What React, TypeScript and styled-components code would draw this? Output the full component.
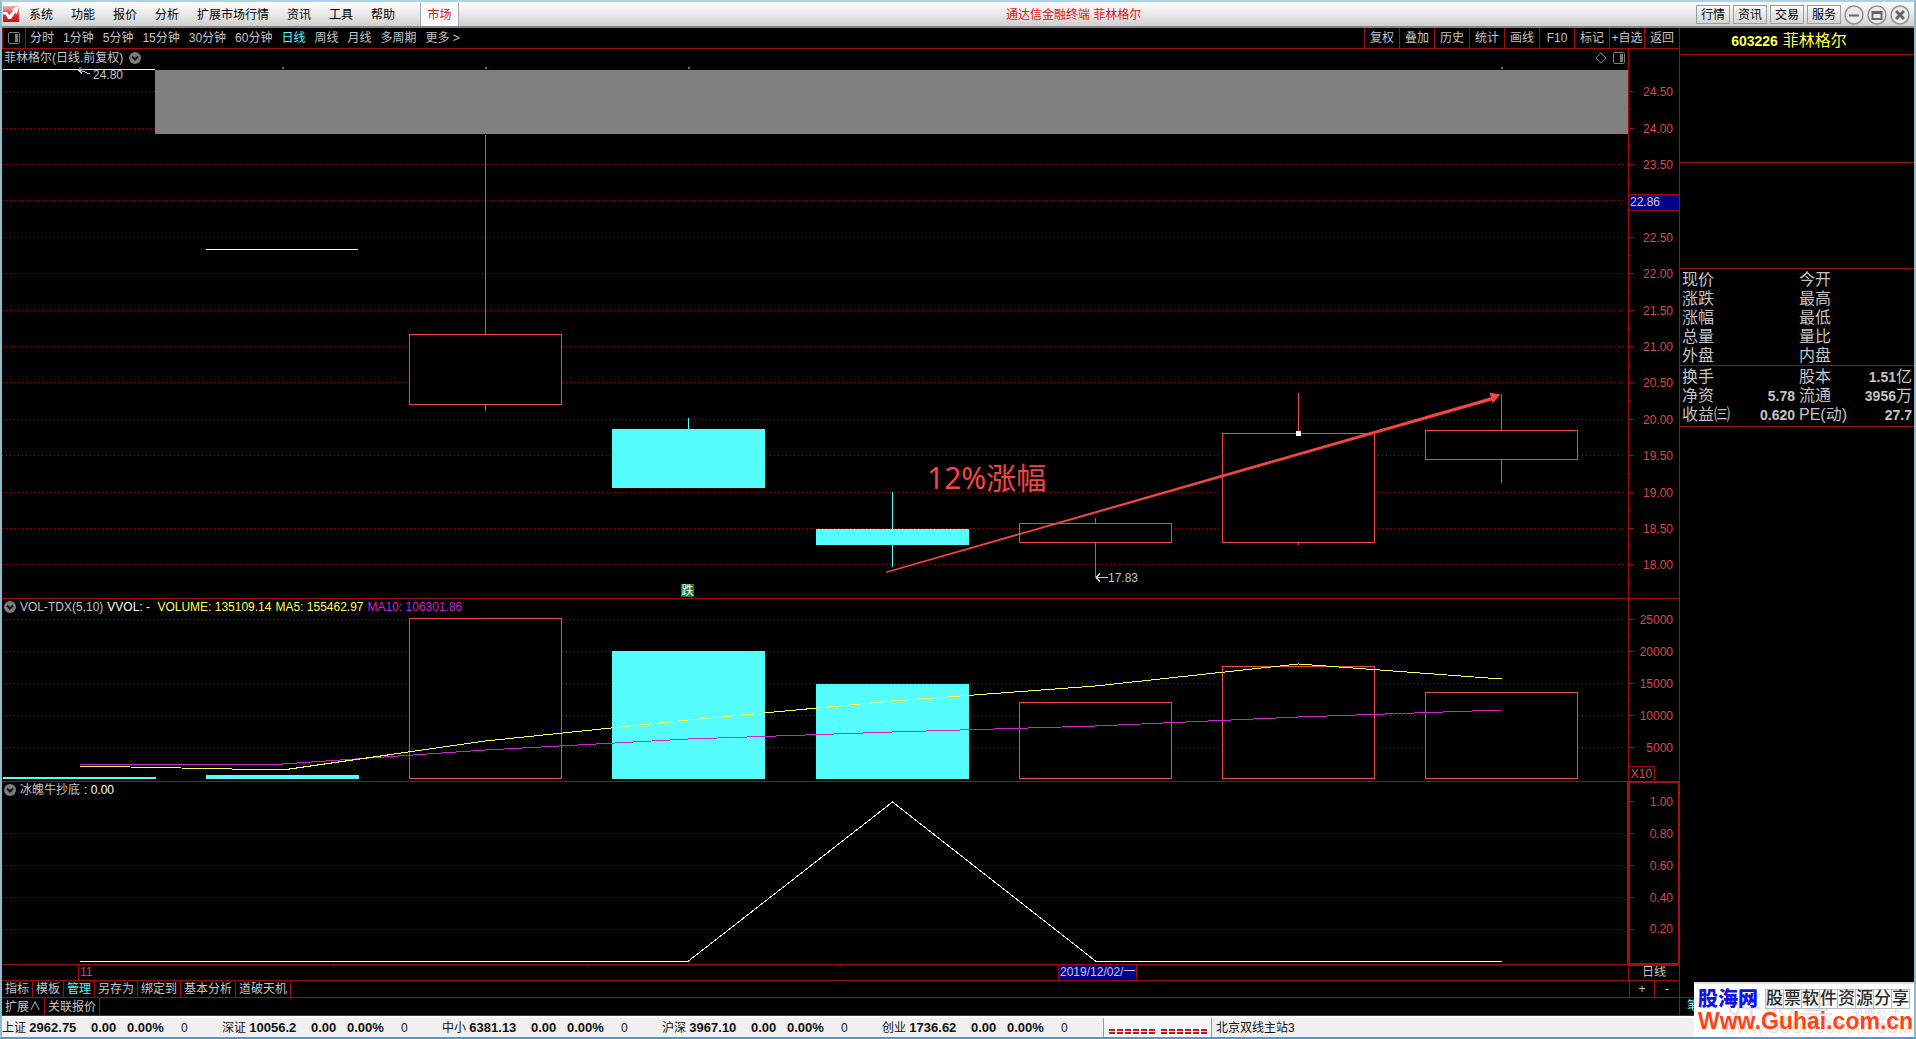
import React from "react";
import styled, { createGlobalStyle } from "styled-components";

const LINE = "#a00c10";
const RED = "#f24545";
const AXIS_TEXT = "#dc4646";
const CYAN = "#54fcfc";
const SILVER = "#c4c4c4";
const YELLOW = "#ffff54";
const PURPLE = "#d420d4";

const GlobalStyle = createGlobalStyle`
  html, body { margin: 0; background: #000; }
  * { box-sizing: border-box; }
  body, button, td, th {
    font-family: "Liberation Sans", "Noto Sans CJK SC", sans-serif;
    font-size: 12px;
    line-height: 16px;
    font-weight: 400;
  }
  button { background: none; border: 0; padding: 0; margin: 0; color: inherit; white-space: nowrap; cursor: pointer; }
`;

const Window = styled.div`
  position: relative;
  height: 100vh;
  display: flex;
  flex-direction: column;
  overflow: hidden;
  background: #000;
  color: ${SILVER};
  border: 2px solid #8fb9cf;
  border-top-color: #a9d3ea;
  border-bottom-color: #4a9cd0;
`;

/* Title bar */

const TitleBar = styled.header`
  height: 26px;
  flex: none;
  display: flex;
  align-items: stretch;
  padding-top: 1px;
  background: linear-gradient(#fdfdfd, #e9e9e9 50%, #cfcfcf);
  border-bottom: 2px solid #858585;
  color: #000;
`;
const Logo = styled.svg`
  margin: 3px 10px 0 1px;
  width: 16px;
  height: 16px;
  flex: none;
`;
const Menu = styled.nav`
  display: flex;
  gap: 18px;
`;
const MarketTab = styled.button`
  margin-left: 25px;
  width: 39px;
  color: #d81414;
  background: #fbf9f9;
  border-left: 1px solid #a8a8b4;
  border-right: 1px solid #a8a8b4;
`;
const Caption = styled.h1`
  flex: 1;
  margin: 0;
  padding-right: 8px;
  font-size: 12px;
  line-height: 24px;
  font-weight: 400;
  color: #e01414;
  text-align: center;
`;
const WindowActions = styled.div`
  display: flex;
  align-items: center;
  gap: 3px;
  padding-right: 4px;
`;
const ActionButton = styled.button`
  width: 34px;
  height: 19px;
  border: 1px solid #9c9c9c;
  background: linear-gradient(#fafafa, #d4d4d4);
`;
const RoundButton = styled.button`
  width: 20px;
  height: 20px;
  display: grid;
`;

/* Work area */

const Work = styled.main`
  flex: 1;
  min-height: 0;
  display: flex;
`;
const Left = styled.section`
  flex: 1;
  min-width: 0;
  display: flex;
  flex-direction: column;
`;
const Toolbar = styled.div`
  height: 21px;
  flex: none;
  display: flex;
  border-bottom: 1px solid ${LINE};
`;
const LayoutButton = styled.button`
  width: 24px;
  display: grid;
  place-items: center;
  border-left: 1px solid ${LINE};
  border-right: 1px solid ${LINE};
`;
const Periods = styled.nav`
  flex: 1;
  display: flex;
  gap: 9px;
  padding-left: 4px;
`;
const Period = styled.button<{ $on?: boolean }>`
  color: ${(p) => (p.$on ? CYAN : SILVER)};
`;
const ToolCell = styled.button`
  width: 35px;
  border-left: 1px solid ${LINE};
`;

const Charts = styled.div`
  flex: 1;
  min-height: 0;
  display: grid;
  grid-template-rows: 550fr 183fr 183fr 16px;
`;
const Panel = styled.div`
  min-height: 0;
  display: flex;
`;
const Plot = styled.div`
  position: relative;
  flex: 1;
  border-bottom: 1px solid ${LINE};
`;
const Axis = styled.div<{ $active?: boolean }>`
  position: relative;
  width: 51px;
  display: flex;
  align-items: flex-end;
  border-left: 1px solid ${LINE};
  border-bottom: 1px solid ${LINE};
  ${(p) => p.$active && "box-shadow: inset 0 0 0 1px #a81014, 0 0 0 1px #a81014;"}
`;
const Drawing = styled.svg`
  position: absolute;
  inset: 0;
  width: 100%;
  height: 100%;
`;
const PanelTitle = styled.div`
  position: relative;
  display: flex;
  align-items: center;
  gap: 4px;
  height: 16px;
  padding: 0 3px 0 2px;
`;
const MainTitle = styled(PanelTitle)`
  gap: 6px;
  height: 18px;
`;
const Reading = styled.span<{ $color?: string }>`
  color: ${(p) => p.$color ?? "#fff"};
  white-space: pre;
`;
const Spacer = styled.span`
  flex: 1;
`;
const IconButton = styled.button`
  display: grid;
  place-items: center;
`;
const Multiplier = styled.span`
  width: 26px;
  height: 15px;
  line-height: 14px;
  text-align: center;
  color: ${AXIS_TEXT};
  border: 1px solid ${LINE};
  border-left: 0;
  border-bottom: 0;
`;

const Timeline = styled.div`
  position: relative;
  flex: 1;
  line-height: 15px;
  border-bottom: 1px solid ${LINE};
`;
const MonthMark = styled.span`
  position: absolute;
  top: 0;
  bottom: 0;
  padding-left: 1px;
  border-left: 1px solid ${LINE};
  color: ${AXIS_TEXT};
`;
const DateMark = styled.span`
  position: absolute;
  top: 0;
  bottom: 0;
  padding: 0 1px;
  white-space: nowrap;
  background: #000088;
  color: #c8c8e8;
  border-left: 1px solid ${LINE};
  border-right: 1px solid ${LINE};
`;
const PeriodName = styled.div`
  width: 51px;
  line-height: 15px;
  text-align: center;
  border-left: 1px solid ${LINE};
  border-bottom: 1px solid ${LINE};
`;

const TabRow = styled.div`
  height: 17px;
  flex: none;
  display: flex;
  border-bottom: 1px solid ${LINE};
`;
const LastTabRow = styled(TabRow)`
  height: 18px;
`;
const Tab = styled.button<{ $on?: boolean }>`
  padding: 0 3px;
  border-right: 1px solid ${LINE};
  color: ${(p) => (p.$on ? CYAN : SILVER)};
`;
const ZoomButton = styled.button`
  width: 25px;
  border-left: 1px solid ${LINE};
`;

/* Quote panel */

const Side = styled.aside`
  width: 235px;
  flex: none;
  display: flex;
  flex-direction: column;
  border-left: 1px solid ${LINE};
`;
const StockName = styled.h2`
  height: 27px;
  margin: 0;
  padding-right: 16px;
  display: flex;
  align-items: center;
  justify-content: center;
  gap: 5px;
  font-size: 16px;
  font-weight: 400;
  color: ${YELLOW};
  border-bottom: 1px solid ${LINE};
`;
const Figure = styled.b`
  font-size: 14px;
  line-height: 14px;
`;
const Blank = styled.div<{ $height: number }>`
  height: ${(p) => p.$height}px;
  border-bottom: 1px solid ${LINE};
`;
const QuoteBox = styled.div<{ $foot?: number }>`
  padding: 1px 2px ${(p) => p.$foot ?? 0}px;
  border-bottom: 1px solid ${LINE};
`;
const QuoteTable = styled.table`
  width: 100%;
  table-layout: fixed;
  border-collapse: collapse;
`;
const QuoteLabel = styled.th`
  width: 50px;
  height: 19px;
  padding: 0;
  font-size: 16px;
  line-height: 18px;
  text-align: left;
  white-space: nowrap;
  &:first-child { width: 54px; }
`;
const QuoteValue = styled.td`
  height: 19px;
  padding: 0 4px 0 0;
  font-size: 16px;
  line-height: 18px;
  text-align: right;
  white-space: nowrap;
  &:last-child { padding-right: 0; }
`;
const SideFoot = styled.div`
  height: 19px;
  margin-top: auto;
  padding-left: 7px;
  color: ${CYAN};
  border-top: 1px solid ${LINE};
  border-bottom: 1px solid ${LINE};
`;

/* Status bar */

const Status = styled.footer`
  height: 21px;
  flex: none;
  display: flex;
  align-items: center;
  background: #f0f0f0;
  border-top: 2px solid #fff;
  color: #111;
`;
const Index = styled.div`
  width: 220px;
  display: grid;
  grid-template-columns: 89px 36px 54px 1fr;
  white-space: nowrap;
`;
const IndexFigure = styled.b`
  font-size: 13px;
`;
const Signal = styled.div`
  height: 100%;
  width: 109px;
  margin: 0 4px 0 1px;
  display: grid;
  place-items: center;
  background: #f7f7f7;
  border-left: 1px solid #999;
  border-right: 1px solid #999;
`;

/* Site stamp over the lower right corner */

const Stamp = styled.div`
  position: absolute;
  right: 0;
  bottom: 0;
  width: 220px;
  height: 55px;
  padding: 5px 4px 0;
  overflow: hidden;
  background: #fff;
  border-top: 2px solid #dcdcdc;
`;
const Ghost = styled.span<{ $x: number; $y: number; $size: number; $color: string }>`
  position: absolute;
  left: ${(p) => p.$x}px;
  top: ${(p) => p.$y}px;
  font-size: ${(p) => p.$size}px;
  line-height: ${(p) => p.$size}px;
  color: ${(p) => p.$color};
  white-space: nowrap;
`;
const StampTop = styled.div`
  position: relative;
  display: flex;
  align-items: center;
  gap: 7px;
  height: 20px;
`;
const StampName = styled.b`
  font-size: 20px;
  line-height: 20px;
  font-weight: 900;
  color: #1010f0;
`;
const Tagline = styled.span`
  display: flex;
  font-size: 17px;
  line-height: 18px;
  color: #2c2c2c;
  border-right: 1px solid #bbb;
`;
const TagChar = styled.span`
  width: 18px;
  text-align: center;
  border: 1px solid #bbb;
  border-right: 0;
  font-weight: 500;
`;
const StampLink = styled.a`
  position: relative;
  display: block;
  font-size: 23px;
  line-height: 24px;
  font-weight: 700;
  color: #ff4316;
  text-decoration: none;
  white-space: nowrap;
`;

/* Data */

const WIDTH = 1626;
const BODY = 153;
const STEP = 203.25;
const center = (i: number) => Math.floor(77.1 + i * STEP) + 0.5;

type Candle = { up: boolean; open: number; close: number; high: number; low: number; vol: number };
/* Pixel rows inside the price plot (549 high); vol is the bar top in the volume plot (182 high). */
const candles: Candle[] = [
  { up: true, open: 20, close: 20, high: 20, low: 20, vol: 178 },
  { up: true, open: 200, close: 200, high: 200, low: 200, vol: 176 },
  { up: true, open: 355, close: 285, high: 86, low: 362, vol: 19 },
  { up: false, open: 380, close: 438, high: 369, low: 438, vol: 52 },
  { up: false, open: 480, close: 495, high: 443, low: 518, vol: 85 },
  { up: true, open: 493, close: 474, high: 469, low: 529, vol: 103 },
  { up: true, open: 493, close: 384, high: 344, low: 496, vol: 67 },
  { up: true, open: 410, close: 381, high: 345, low: 434, vol: 93 },
];

const priceY = (p: number) => 42.3 + (24.5 - p) * 72.77;
const prices = Array.from({ length: 14 }, (_, i) => 24.5 - i * 0.5);
const volumes = [25000, 20000, 15000, 10000, 5000];
const volumeY = (v: number) => 179.3 - (v / 5000) * 31.8;
const signals = [1, 0.8, 0.6, 0.4, 0.2];
const signalY = (v: number) => 179.3 - v * 160;

const pts = (ys: number[]) => ys.map((y, i) => `${center(i)},${y}`).join(" ");
const ma5 = pts([167, 171, 142, 121, 102, 87, 65, 80]);
const ma10 = pts([165, 165, 151, 140, 133, 127, 118, 111]);
const wave = pts([179, 179, 179, 179, 20, 179, 179, 179]);

/* Drawing parts */

const Grid = ({ rows }: { rows: number[] }) => (
  <g stroke="#8a1a1a" strokeDasharray="1 3">
    {rows.map((y) => (
      <line key={y} x1={0} x2={WIDTH - 3} y1={Math.round(y) + 0.5} y2={Math.round(y) + 0.5} />
    ))}
  </g>
);

type Scale = { rows: { y: number; label: string }[]; height: number; half: number };
const AxisScale = ({ rows, height, half }: Scale) => (
  <Drawing shapeRendering="crispEdges">
    {rows.map(({ y, label }) => {
      const at = (v: number) => `${((Math.round(v) + 0.5) / height) * 100}%`;
      return (
        <g key={label} stroke={LINE}>
          <line x1={0} x2={5} y1={at(y)} y2={at(y)} />
          <line x1={0} x2={2} y1={at(y + half)} y2={at(y + half)} />
          <text x={44} y={at(y)} dy={4} textAnchor="end" fontSize={12} fill={AXIS_TEXT} stroke="none">
            {label}
          </text>
        </g>
      );
    })}
  </Drawing>
);

const Fold = () => (
  <IconButton aria-label="展开">
    <svg width="12" height="12" viewBox="0 0 12 12">
      <circle cx="6" cy="6" r="6" fill="#7c7c7c" />
      <path d="M3 4.5 6 7.5 9 4.5" fill="none" stroke="#111" strokeWidth="2" />
    </svg>
  </IconButton>
);

const SplitIcon = () => (
  <svg width="12" height="12" viewBox="0 0 12 12">
    <rect x="0.5" y="0.5" width="11" height="11" rx="1.5" fill="none" stroke="#7c7c7c" />
    <rect x="7" y="2" width="3" height="8" fill="#7c7c7c" />
  </svg>
);

const PricePlot = () => (
  <Drawing shapeRendering="crispEdges">
    <svg viewBox={`0 0 ${WIDTH} 549`} preserveAspectRatio="none" width="100%" height="100%">
      <Grid rows={prices.map(priceY)} />
      <rect x={153} y={21} width={WIDTH - 153} height={64} fill="#808080" />
      {candles.map((c, i) => {
        const x = center(i);
        const left = x - 0.5 - 76;
        if (c.open === c.close) {
          return <rect key={i} x={Math.max(left, 1)} y={c.open} width={BODY - 1} height={1} fill="#fff" />;
        }
        const top = Math.min(c.open, c.close);
        const bottom = Math.max(c.open, c.close);
        return (
          <g key={i} stroke={c.up ? RED : CYAN}>
            <line x1={x} x2={x} y1={c.high} y2={top} />
            <line x1={x} x2={x} y1={bottom} y2={c.low} />
            <rect x={left + 0.5} y={top + 0.5} width={BODY - 1} height={bottom - top} fill={c.up ? "#000" : CYAN} />
          </g>
        );
      })}
      {[0, 1, 2, 3, 7].map((i) => (
        <rect key={i} x={center(i) - 0.5} y={18} width={2} height={2} fill="#b434b4" />
      ))}
      <rect x={center(6) - 2.5} y={382} width={5} height={5} fill="#fff" />
      <path d="M76 20.5h5M76 20.5l4 4M76 20.5l12 4.500" stroke="#d0d0d0" fill="none" />
      <path d="M1094 528.5h12M1094 528.5l4-4M1094 528.5l4 4" stroke="#d0d0d0" fill="none" />
      <path
        shapeRendering="auto"
        d="M884 522.6 1489 348.2 1487.5 343.5 1498.500 345.500 1490.500 354.500 1489.900 351.600 884.300 523.900Z"
        fill={RED}
      />
    </svg>
    <text x={`${(91 / WIDTH) * 100}%`} y={`${(30 / 549) * 100}%`} fontSize={12} fill={SILVER}>24.80</text>
    <text x={`${(1106 / WIDTH) * 100}%`} y={`${(533 / 549) * 100}%`} fontSize={12} fill={SILVER}>17.83</text>
    <text
      x={`${(925 / WIDTH) * 100}%`}
      y={`${(440 / 549) * 100}%`}
      fontSize={30}
      fontFamily='"Noto Sans", "Noto Sans CJK SC", sans-serif'
      fill={RED}
    >
      12%涨幅
    </text>
    <svg x={`${(679 / WIDTH) * 100}%`} y={`${(535 / 549) * 100}%`} width={13} height={13}>
      <rect width={13} height={13} fill="#1f7a1f" />
      <text x={0.5} y={11} fontSize={12} fill="#fff">跌</text>
    </svg>
  </Drawing>
);

const VolumePlot = () => (
  <Drawing viewBox={`0 0 ${WIDTH} 182`} preserveAspectRatio="none" shapeRendering="crispEdges">
    <Grid rows={volumes.map(volumeY)} />
    {candles.map((c, i) => {
      const left = center(i) - 0.5 - 76;
      const solid = !c.up || i < 2;
      return solid ? (
        <rect key={i} x={Math.max(left, 1)} y={c.vol} width={BODY} height={180 - c.vol} fill={CYAN} />
      ) : (
        <rect key={i} x={left + 0.5} y={c.vol + 0.5} width={BODY - 1} height={179 - c.vol} fill="#000" stroke={RED} />
      );
    })}
    <polyline points={ma10} fill="none" stroke={PURPLE} />
    <polyline points={ma5} fill="none" stroke={YELLOW} />
  </Drawing>
);

const SignalPlot = () => (
  <Drawing viewBox={`0 0 ${WIDTH} 182`} preserveAspectRatio="none" shapeRendering="crispEdges">
    <Grid rows={signals.slice(1).map(signalY)} />
    <polyline points={wave} fill="none" stroke="#fff" />
  </Drawing>
);

const CurrentPrice = styled.span`
  position: absolute;
  left: 0;
  right: 0;
  height: 17px;
  padding-left: 1px;
  background: #000088;
  color: #c8c8e8;
  border-top: 1px solid ${LINE};
  border-bottom: 1px solid ${LINE};
  line-height: 15px;
`;

type Pair = [string, string, string, string, string, string];
const Quotes = ({ rows, foot }: { rows: Pair[]; foot?: number }) => (
  <QuoteBox $foot={foot}>
    <QuoteTable>
      <tbody>
        {rows.map(([a, av, au, b, bv, bu]) => (
          <tr key={a}>
            <QuoteLabel scope="row">{a}</QuoteLabel>
            <QuoteValue><Figure>{av}</Figure>{au}</QuoteValue>
            <QuoteLabel scope="row">{b}</QuoteLabel>
            <QuoteValue><Figure>{bv}</Figure>{bu}</QuoteValue>
          </tr>
        ))}
      </tbody>
    </QuoteTable>
  </QuoteBox>
);

const roundIcons: [string, string][] = [
  ["最小化", "M5 10.500h10"],
  ["最大化", "M5.500 7h9v7h-9zM5.500 8h9"],
  ["关闭", "M6 6l8 8M14 6l-8 8"],
];

const indexes = [
  ["上证", "2962.75"],
  ["深证", "10056.2"],
  ["中小", "6381.13"],
  ["沪深", "3967.10"],
  ["创业", "1736.62"],
];

export default function App() {
  return (
    <>
      <GlobalStyle />
      <Window>
        <TitleBar>
          <Logo viewBox="0 0 16 16">
            <defs>
              <linearGradient id="logo" x1="0" y1="0" x2="0" y2="1">
                <stop offset="0" stopColor="#f0b4b4" />
                <stop offset="0.5" stopColor="#dc3c34" />
                <stop offset="1" stopColor="#c01414" />
              </linearGradient>
            </defs>
            <rect width="16" height="16" fill="url(#logo)" />
            <path d="M0 6 4 6 6 9 10 5 9 3 16 0 14 8 12 7 8 13 5 13 3 9 0 8Z" fill="#fff" />
          </Logo>
          <Menu>
            {["系统", "功能", "报价", "分析", "扩展市场行情", "资讯", "工具", "帮助"].map((t) => (
              <button key={t}>{t}</button>
            ))}
          </Menu>
          <MarketTab>市场</MarketTab>
          <Caption>通达信金融终端 菲林格尔</Caption>
          <WindowActions>
            {["行情", "资讯", "交易", "服务"].map((t) => (
              <ActionButton key={t}>{t}</ActionButton>
            ))}
            {roundIcons.map(([name, d]) => (
              <RoundButton key={name} aria-label={name}>
                <svg width="20" height="20" viewBox="0 0 20 20" fill="none">
                  <circle cx="10" cy="10" r="9" fill="#ececec" stroke="#909090" strokeWidth="1.500" />
                  <path d={d} stroke="#666" strokeWidth={name === "关闭" ? 3 : 2} />
                </svg>
              </RoundButton>
            ))}
          </WindowActions>
        </TitleBar>

        <Work>
          <Left>
            <Toolbar>
              <LayoutButton aria-label="布局"><SplitIcon /></LayoutButton>
              <Periods>
                {["分时", "1分钟", "5分钟", "15分钟", "30分钟", "60分钟", "日线", "周线", "月线", "多周期"].map((t) => (
                  <Period key={t} $on={t === "日线"}>{t}</Period>
                ))}
                <Period>更多 &gt;</Period>
              </Periods>
              {["复权", "叠加", "历史", "统计", "画线", "F10", "标记", "+自选", "返回"].map((t) => (
                <ToolCell key={t}>{t}</ToolCell>
              ))}
            </Toolbar>

            <Charts>
              <Panel>
                <Plot>
                  <PricePlot />
                  <MainTitle>
                    <span>菲林格尔(日线.前复权)</span>
                    <Fold />
                    <Spacer />
                    <IconButton aria-label="标记点">
                      <svg width="12" height="12" viewBox="0 0 12 12">
                        <path d="M6 1 11 6 6 11 1 6Z" fill="none" stroke="#7c7c7c" />
                      </svg>
                    </IconButton>
                    <IconButton aria-label="分栏"><SplitIcon /></IconButton>
                  </MainTitle>
                </Plot>
                <Axis>
                  <AxisScale
                    height={549}
                    half={18}
                    rows={prices.filter((p) => p !== 23).map((p) => ({ y: priceY(p), label: p.toFixed(2) }))}
                  />
                  <CurrentPrice style={{ top: `${(145 / 549) * 100}%` }}>22.86</CurrentPrice>
                </Axis>
              </Panel>

              <Panel>
                <Plot>
                  <VolumePlot />
                  <PanelTitle>
                    <Fold />
                    <span>VOL-TDX(5,10)</span>
                    <Reading>{"VVOL: - "}</Reading>
                    <Reading $color={YELLOW}>VOLUME: 135109.14</Reading>
                    <Reading $color={YELLOW}>MA5: 155462.97</Reading>
                    <Reading $color={PURPLE}>MA10: 106301.86</Reading>
                  </PanelTitle>
                </Plot>
                <Axis>
                  <AxisScale
                    height={182}
                    half={16}
                    rows={volumes.map((v) => ({ y: volumeY(v), label: String(v) }))}
                  />
                  <Multiplier>X10</Multiplier>
                </Axis>
              </Panel>

              <Panel>
                <Plot>
                  <SignalPlot />
                  <PanelTitle>
                    <Fold />
                    <span>冰魄牛抄底</span>
                    <Reading>: 0.00</Reading>
                  </PanelTitle>
                </Plot>
                <Axis $active>
                  <AxisScale
                    height={182}
                    half={16}
                    rows={signals.map((v) => ({ y: signalY(v), label: v.toFixed(2) }))}
                  />
                </Axis>
              </Panel>

              <Panel>
                <Timeline>
                  <Drawing shapeRendering="crispEdges">
                    {[331, 585, 838].map((x) => (
                      <line key={x} x1={`${(x / WIDTH) * 100}%`} x2={`${(x / WIDTH) * 100}%`} y1={0} y2={2} stroke={LINE} />
                    ))}
                  </Drawing>
                  <MonthMark style={{ left: `${(76 / WIDTH) * 100}%` }}>11</MonthMark>
                  <DateMark style={{ left: `${(1056 / WIDTH) * 100}%` }}>2019/12/02/一</DateMark>
                </Timeline>
                <PeriodName>日线</PeriodName>
              </Panel>
            </Charts>

            <TabRow>
              {["指标", "模板", "管理", "另存为", "绑定到", "基本分析", "道破天机"].map((t) => (
                <Tab key={t} $on={t === "管理"}>{t}</Tab>
              ))}
              <Spacer />
              <ZoomButton aria-label="放大">+</ZoomButton>
              <ZoomButton aria-label="缩小">-</ZoomButton>
            </TabRow>
            <LastTabRow>
              <Tab>扩展∧</Tab>
              <Tab>关联报价</Tab>
            </LastTabRow>
          </Left>

          <Side>
            <StockName><Figure>603226</Figure>菲林格尔</StockName>
            <Blank $height={108} />
            <Blank $height={106} />
            <Quotes
              rows={[
                ["现价", "", "", "今开", "", ""],
                ["涨跌", "", "", "最高", "", ""],
                ["涨幅", "", "", "最低", "", ""],
                ["总量", "", "", "量比", "", ""],
                ["外盘", "", "", "内盘", "", ""],
              ]}
            />
            <Quotes
              foot={2}
              rows={[
                ["换手", "", "", "股本", "1.51", "亿"],
                ["净资", "5.78", "", "流通", "3956", "万"],
                ["收益㈢", "0.620", "", "PE(动)", "27.7", ""],
              ]}
            />
            <SideFoot>笔</SideFoot>
          </Side>
        </Work>

        <Status>
          {indexes.map(([name, value]) => (
            <Index key={name}>
              <span>{name} <IndexFigure>{value}</IndexFigure></span>
              <IndexFigure>0.00</IndexFigure>
              <IndexFigure>0.00%</IndexFigure>
              <span>0</span>
            </Index>
          ))}
          <Signal>
            <svg width="98" height="16" viewBox="0 0 98 16" shapeRendering="crispEdges">
              {Array.from({ length: 12 }, (_, i) => {
                const x = i * 8 + (i > 5 ? 4 : 0);
                return (
                  <g key={i} fill="#c81818">
                    <rect x={x} y={9} width={6} height={2} />
                    <rect x={x} y={12} width={6} height={2} />
                  </g>
                );
              })}
            </svg>
          </Signal>
          <span>北京双线主站3</span>
        </Status>

        <Stamp>
          <Ghost $x={32} $y={8} $size={36} $color="#e6e6e6">好股票</Ghost>
          <Ghost $x={158} $y={26} $size={12} $color="#d4e2f2">股票公式</Ghost>
          <Ghost $x={28} $y={36} $size={15} $color="#fbd8d2">WWW.GOODGUPIAO.COM</Ghost>
          <StampTop>
            <StampName>股海网</StampName>
            <Tagline>
              {[..."股票软件资源分享"].map((c, i) => (
                <TagChar key={i}>{c}</TagChar>
              ))}
            </Tagline>
          </StampTop>
          <StampLink href="#">Www.Guhai.com.cn</StampLink>
        </Stamp>
      </Window>
    </>
  );
}
